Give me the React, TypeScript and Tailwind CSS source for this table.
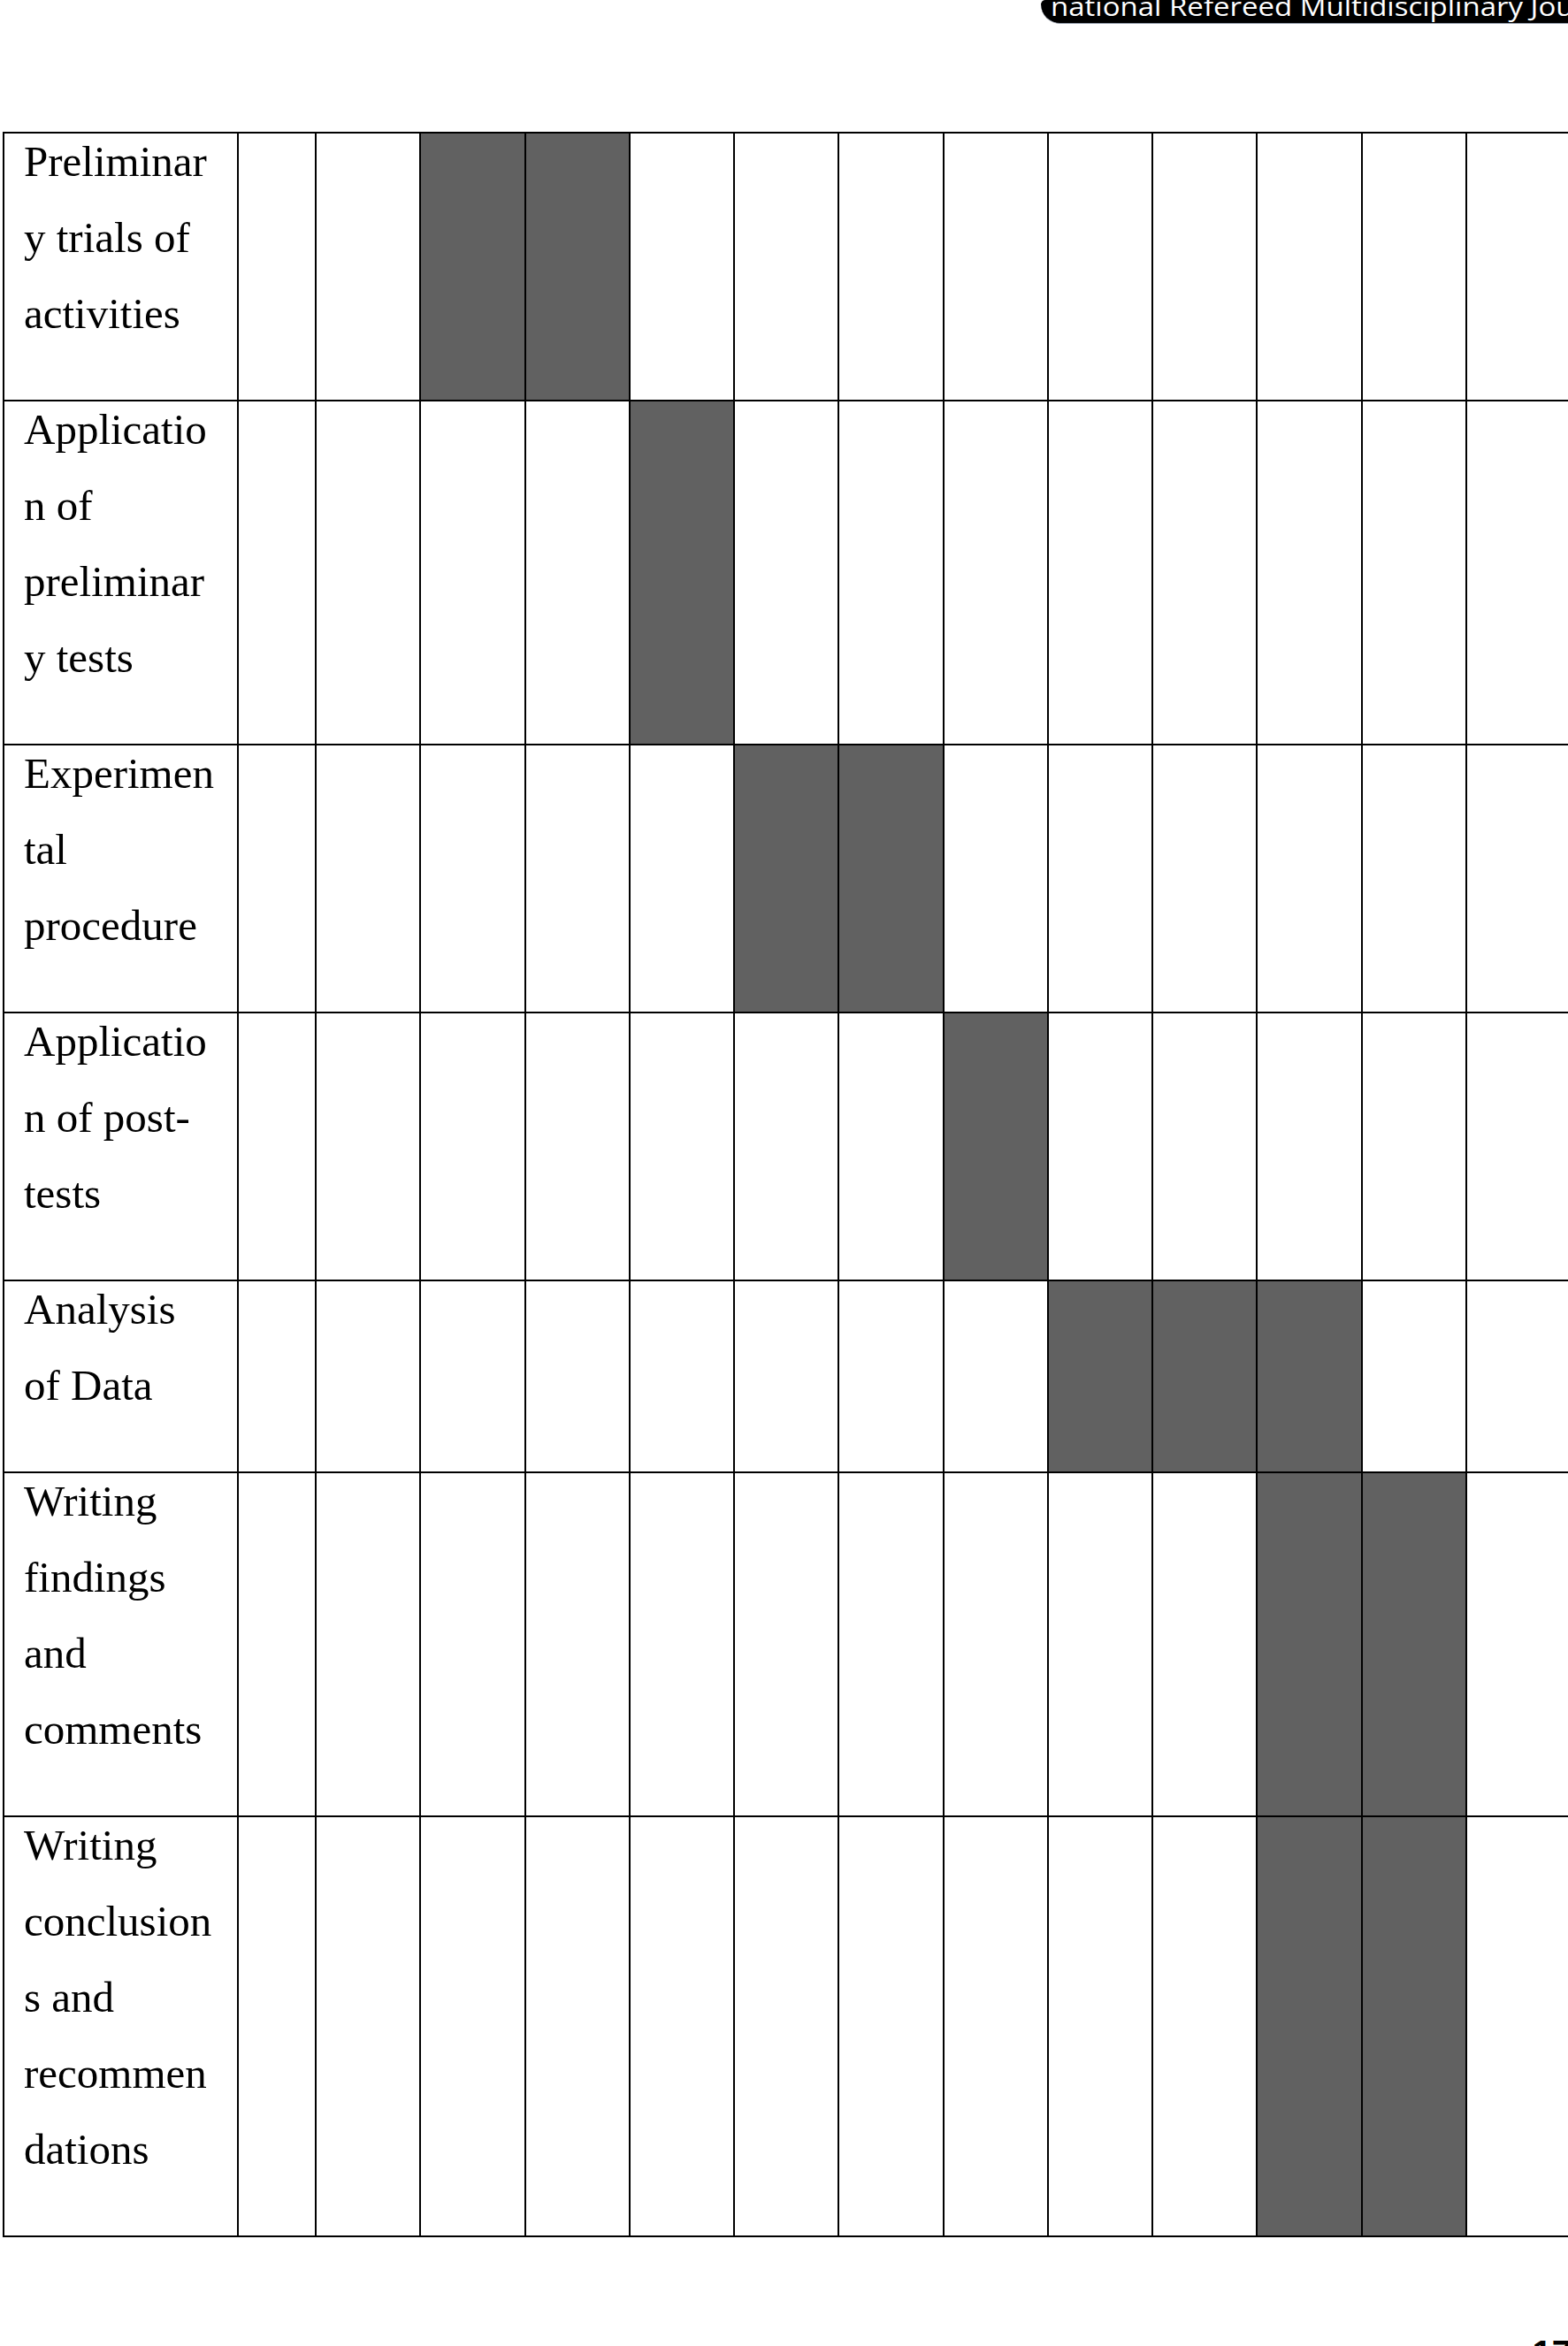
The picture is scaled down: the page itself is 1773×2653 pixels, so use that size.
import React from "react";

// ─── Gantt-style schedule table ───────────────────────────────────────
// Rows: activity label (wrapped by hand like the source doc) + 13 time slots.
// `filled` = indices of the slots that are shaded.

type Row = { lines: string[]; filled: number[] };

const ROWS: Row[] = [
  { lines: ["Preliminar", "y trials of", "activities"], filled: [2, 3] },
  { lines: ["Applicatio", "n of", "preliminar", "y tests"], filled: [4] },
  { lines: ["Experimen", "tal", "procedure"], filled: [5, 6] },
  { lines: ["Applicatio", "n of post-", "tests"], filled: [7] },
  { lines: ["Analysis", "of Data"], filled: [8, 9, 10] },
  { lines: ["Writing", "findings", "and", "comments"], filled: [10, 11] },
  {
    lines: ["Writing", "conclusion", "s and", "recommen", "dations"],
    filled: [10, 11],
  },
];

const SLOTS = Array.from({ length: 13 }, (_, i) => i);

export default function App() {
  return (
    <div className="w-[1773px] h-[2653px] overflow-hidden bg-white text-black">
      {/* ── Running header pill ── */}
      <div className="flex justify-end h-[27px]">
        <div className="w-[596px] h-[27px] bg-black rounded-bl-[26px] rounded-tl-[6px] overflow-hidden border-b border-gray-400">
          <span
            className="inline-block origin-left scale-x-[1.1] text-white text-[30px] leading-[20px] whitespace-nowrap pl-[10px] -mt-[6px]"
            style={{ fontFamily: '"Open Sans", "Noto Sans", sans-serif' }}
          >
            national Refereed Multidisciplinary Journal
          </span>
        </div>
      </div>

      {/* ── Schedule table ── */}
      <div
        className="mt-[122px] ml-[3px] w-[1790px] border-t-2 border-l-2 border-black grid grid-cols-[265px_88px_repeat(12,118.27px)]"
        style={{ fontFamily: '"Liberation Serif", "Times New Roman", serif' }}
      >
        {ROWS.map((row, r) => (
          <React.Fragment key={r}>
            <div className="border-r-2 border-b-2 border-black pl-[22px] pb-[54px]">
              <div className="-mt-[11px] text-[49px] leading-[86px] whitespace-nowrap">
                {row.lines.map((l, i) => (
                  <div key={i}>{l}</div>
                ))}
              </div>
            </div>
            {SLOTS.map((s) => (
              <div
                key={s}
                className={
                  row.filled.includes(s)
                    ? "border-r-2 border-b-2 border-black bg-[#616161]"
                    : "border-r-2 border-b-2 border-black bg-white"
                }
              />
            ))}
          </React.Fragment>
        ))}
      </div>

      {/* ── Page number (cut off by the page edge) ── */}
      <div className="flex justify-end mt-[111px]">
        <span
          className="text-[40px] leading-[40px] font-bold -mr-[4px]"
          style={{ fontFamily: '"Liberation Sans", Arial, sans-serif' }}
        >
          17
        </span>
      </div>
    </div>
  );
}
